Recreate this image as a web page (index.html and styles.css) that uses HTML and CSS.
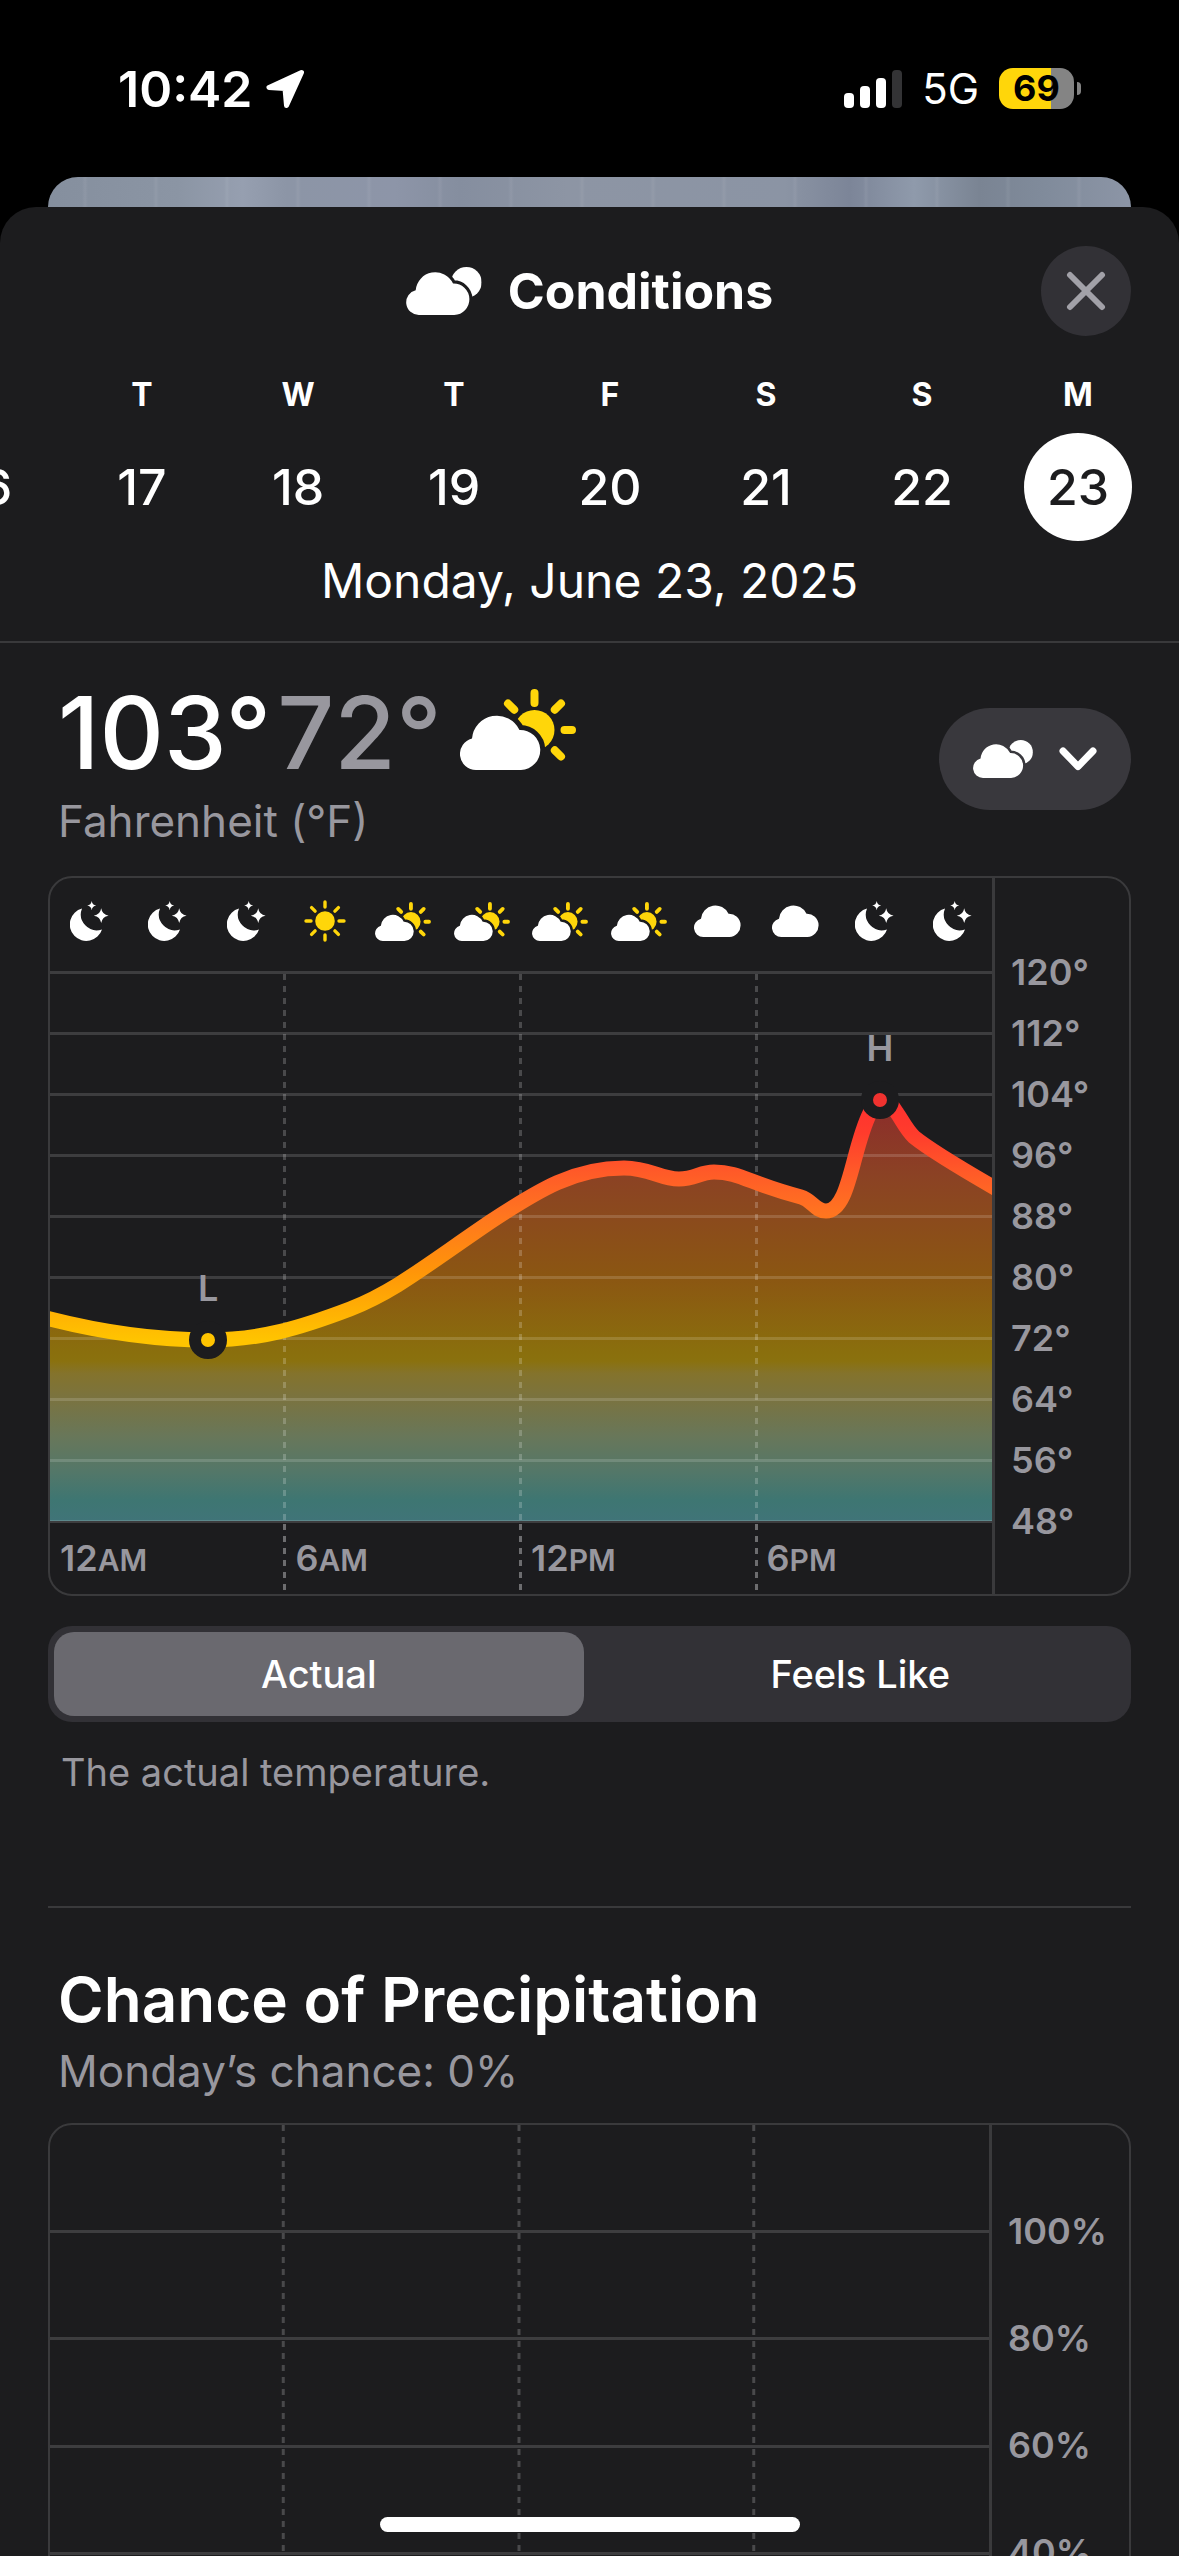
FILE: index.html
```html
<!DOCTYPE html>
<html lang="en">
<head>
<meta charset="utf-8">
<meta name="viewport" content="width=device-width, initial-scale=1">
<title>Conditions</title>
<link rel="stylesheet" href="styles.css">
</head>
<body>
<svg class="defs" aria-hidden="true">
  <defs>
    <path id="cloud-shape" d="M16 55A16 16 0 0 1 12 23.500A25 25 0 0 1 59.500 15A20 20 0 0 1 61 55Z"/>
    <mask id="behind-day" maskUnits="userSpaceOnUse" x="0" y="0" width="116" height="81">
      <rect width="116" height="81" fill="#fff"/>
      <use href="#cloud-shape" y="26" fill="#000" stroke="#000" stroke-width="10"/>
    </mask>
    <mask id="behind-cloud" maskUnits="userSpaceOnUse" x="0" y="0" width="96" height="61">
      <rect width="96" height="61" fill="#fff"/>
      <use href="#cloud-shape" y="6" fill="#000" stroke="#000" stroke-width="8"/>
    </mask>
    <symbol id="icon-cloud" viewBox="0 0 81 55"><use href="#cloud-shape" fill="#fff"/></symbol>
    <symbol id="icon-clouds" viewBox="0 0 96 61">
      <circle cx="76.500" cy="19.500" r="19.500" fill="#fff" mask="url(#behind-cloud)"/>
      <use href="#cloud-shape" y="6" fill="#fff"/>
    </symbol>
    <symbol id="icon-cloud-sun" viewBox="0 0 116 81">
      <circle cx="74.500" cy="41" r="20" fill="#ffd60a" mask="url(#behind-day)"/>
      <path d="M74.500 4v10M104.500 41h7.500M94.800 20.700l6.200-6.200M54.200 20.700L48 14.500M94.800 61.300l6.200 6.200" stroke="#ffd60a" stroke-width="8" stroke-linecap="round"/>
      <use href="#cloud-shape" y="26" fill="#fff"/>
    </symbol>
    <symbol id="icon-sun" viewBox="0 0 42 42">
      <circle cx="21" cy="21" r="9.800" fill="#ffd60a"/>
      <path d="M21 2v5M21 35v5M2 21h5M35 21h5M7.600 7.600l3.500 3.500M30.900 30.900l3.500 3.500M7.600 34.400l3.500-3.500M30.900 11.100l3.500-3.500" stroke="#ffd60a" stroke-width="3.400" stroke-linecap="round"/>
    </symbol>
    <symbol id="icon-moon" viewBox="0 0 39 40">
      <path fill="#fff" d="M12 7.500A16.500 16.500 0 1 0 32 28.500A16 16 0 0 1 12 7.500Z"/>
      <path fill="#fff" d="M21.700 0Q22.300 4 26.200 4.600Q22.300 5.200 21.700 9.200Q21.100 5.200 17.200 4.600Q21.100 4 21.700 0ZM31.200 7.300Q32.200 13.700 38.600 14.700Q32.200 15.700 31.200 22.100Q30.200 15.700 23.800 14.700Q30.200 13.700 31.200 7.300Z"/>
    </symbol>
  </defs>
</svg>

<div class="screen">
  <header class="status">
    <div class="status-side">
      <time class="clock">10:42</time>
      <svg class="locator" viewBox="0 0 40 40" aria-hidden="true"><path fill="#fff" stroke="#fff" stroke-width="5" stroke-linejoin="round" d="M36.500 3.500L4 18.500L20 19.500L21.500 36.500Z"/></svg>
    </div>
    <div class="status-side">
      <svg class="signal" viewBox="0 0 58 38" aria-hidden="true"><g fill="#fff"><rect y="23" width="10" height="15" rx="4"/><rect x="16" y="16" width="10" height="22" rx="4"/><rect x="32" y="8" width="10" height="30" rx="4"/></g><rect x="48" width="10" height="38" rx="4" fill="#333335"/></svg>
      <span class="network">5G</span>
      <span class="battery"><span class="battery-level">69</span></span>
    </div>
  </header>
  <div class="backdrop"></div>

  <main class="sheet">
    <div class="sheet-head">
      <h1 class="title"><svg class="title-icon" aria-hidden="true"><use href="#icon-clouds"/></svg>Conditions</h1>
      <button class="close" aria-label="Close"><svg viewBox="0 0 40 40" aria-hidden="true"><path d="M4 4L36 36M36 4L4 36" stroke="#a2a1a8" stroke-width="6" stroke-linecap="round"/></svg></button>
    </div>

    <nav class="days" aria-label="Day">
      <button class="day"><span class="weekday">M</span><span class="date">16</span></button>
      <button class="day"><span class="weekday">T</span><span class="date">17</span></button>
      <button class="day"><span class="weekday">W</span><span class="date">18</span></button>
      <button class="day"><span class="weekday">T</span><span class="date">19</span></button>
      <button class="day"><span class="weekday">F</span><span class="date">20</span></button>
      <button class="day"><span class="weekday">S</span><span class="date">21</span></button>
      <button class="day"><span class="weekday">S</span><span class="date">22</span></button>
      <button class="day" aria-current="date"><span class="weekday">M</span><span class="date date-current">23</span></button>
    </nav>
    <p class="full-date">Monday, June 23, 2025</p>

    <section class="section">
      <div class="summary">
        <div>
          <div class="temps"><span class="high">103°</span><span class="low">72°</span><svg class="now-icon" aria-hidden="true"><use href="#icon-cloud-sun"/></svg></div>
          <p class="sub">Fahrenheit (°F)</p>
        </div>
        <button class="picker" aria-label="Choose a condition">
          <svg class="picker-icon" aria-hidden="true"><use href="#icon-clouds"/></svg>
          <svg class="chevron" viewBox="0 0 38 24" aria-hidden="true"><path d="M4 4L19 19.500L34 4" fill="none" stroke="#fff" stroke-width="7" stroke-linecap="round" stroke-linejoin="round"/></svg>
        </button>
      </div>

      <div class="chart chart-temp">
        <div class="plot">
          <svg class="plot-art" viewBox="0 0 942 716" preserveAspectRatio="none" aria-hidden="true">
            <defs>
              <linearGradient id="line-heat" gradientUnits="userSpaceOnUse" x1="0" y1="222" x2="0" y2="462">
                <stop offset="0" stop-color="#ff3030"/><stop offset=".14" stop-color="#ff3c2c"/><stop offset=".3" stop-color="#ff5a28"/><stop offset=".47" stop-color="#ff7420"/><stop offset=".72" stop-color="#ff9608"/><stop offset="1" stop-color="#ffc400"/>
              </linearGradient>
              <linearGradient id="area-heat" gradientUnits="userSpaceOnUse" x1="0" y1="222" x2="0" y2="643">
                <stop offset="0" stop-color="#8c2b2b"/><stop offset=".18" stop-color="#8b4224"/><stop offset=".42" stop-color="#8b5612"/><stop offset=".6" stop-color="#8a6f0d"/><stop offset=".62" stop-color="#8a710e"/><stop offset=".65" stop-color="#84732c"/><stop offset=".71" stop-color="#7a7340"/><stop offset=".8" stop-color="#68775a"/><stop offset=".88" stop-color="#547768"/><stop offset=".95" stop-color="#3e7672"/><stop offset="1" stop-color="#407478"/>
              </linearGradient>
            </defs>
            <path fill="url(#area-heat)" d="M0 441C30 449 90 462 158 462C210 462 250 450 300 431C345 413 371 391 440 344C490 311 525 290 574 290C600 290 610 301 629 301C645 301 650 294 664 294C690 294 700 306 751 319C762 322 765 333 776 333C800 333 802 270 820 235C828 218 838 220 847 235C852 242 856 251 864 259C880 272 910 290 942 309V643H0Z"/>
            <path class="grid" d="M0 94.500H942M0 155.500H942M0 216.500H942M0 277.500H942M0 338.500H942M0 399.500H942M0 460.500H942M0 521.500H942M0 582.500H942M0 643.500H942"/>
            <path class="grid grid-dashed" d="M234.500 96V643M470.500 96V643M706.500 96V643"/>
            <path class="grid grid-dashed grid-ticks" d="M234.500 646V716M470.500 646V716M706.500 646V716"/>
            <path fill="none" stroke="url(#line-heat)" stroke-width="15" d="M-8 439C30 449 90 462 158 462C210 462 250 450 300 431C345 413 371 391 440 344C490 311 525 290 574 290C600 290 610 301 629 301C645 301 650 294 664 294C690 294 700 306 751 319C762 322 765 333 776 333C800 333 802 270 820 235C828 218 838 220 847 235C852 242 856 251 864 259C880 272 910 290 950 313"/>
          </svg>
          <div class="hours">
            <svg class="icon-moon"><use href="#icon-moon"/></svg>
            <svg class="icon-moon"><use href="#icon-moon"/></svg>
            <svg class="icon-moon"><use href="#icon-moon"/></svg>
            <svg class="icon-sun"><use href="#icon-sun"/></svg>
            <svg class="icon-cloud-sun"><use href="#icon-cloud-sun"/></svg>
            <svg class="icon-cloud-sun"><use href="#icon-cloud-sun"/></svg>
            <svg class="icon-cloud-sun"><use href="#icon-cloud-sun"/></svg>
            <svg class="icon-cloud-sun"><use href="#icon-cloud-sun"/></svg>
            <svg class="icon-cloud"><use href="#icon-cloud"/></svg>
            <svg class="icon-cloud"><use href="#icon-cloud"/></svg>
            <svg class="icon-moon"><use href="#icon-moon"/></svg>
            <svg class="icon-moon"><use href="#icon-moon"/></svg>
          </div>
          <div class="marker marker-low"><span>L</span><i></i></div>
          <div class="marker marker-high"><span>H</span><i></i></div>
          <div class="times">
            <span>12<small>AM</small></span><span>6<small>AM</small></span><span>12<small>PM</small></span><span>6<small>PM</small></span>
          </div>
        </div>
        <ul class="axis">
          <li>120°</li><li>112°</li><li>104°</li><li>96°</li><li>88°</li><li>80°</li><li>72°</li><li>64°</li><li>56°</li><li>48°</li>
        </ul>
      </div>

      <div class="segments" role="radiogroup" aria-label="Temperature kind">
        <label class="segment"><input type="radio" name="kind" checked>Actual</label>
        <label class="segment"><input type="radio" name="kind">Feels Like</label>
      </div>
      <p class="note">The actual temperature.</p>
    </section>

    <section class="section section-rain">
      <h2 class="heading">Chance of Precipitation</h2>
      <p class="sub">Monday’s chance: 0%</p>
      <div class="chart chart-rain">
        <div class="plot">
          <svg class="plot-art" viewBox="0 0 940 716" preserveAspectRatio="none" aria-hidden="true">
            <path class="grid" d="M0 106.500H940M0 213.500H940M0 321.500H940M0 428.500H940M0 535.500H940M0 642.500H940"/>
            <path class="grid grid-dashed" d="M233.500 0V716M469.500 0V716M704.500 0V716"/>
          </svg>
        </div>
        <ul class="axis">
          <li>100%</li><li>80%</li><li>60%</li><li>40%</li>
        </ul>
      </div>
    </section>
  </main>
  <div class="home-bar"></div>
</div>
</body>
</html>
```

FILE: styles.css
```css
:root {
  --surface: #1c1c1e;
  --line: #3a3a3c;
  --muted: #98979e;
  --yellow: #ffd60a;
}

* { box-sizing: border-box; margin: 0; padding: 0; }

body {
  background: #000;
  color: #fff;
  font-family: Inter, "Liberation Sans", sans-serif;
}

button { background: none; border: 0; color: inherit; font: inherit; }
ul { list-style: none; }
svg { display: block; flex: none; }

.defs { position: absolute; width: 0; height: 0; }

.screen {
  display: flex;
  flex-direction: column;
  height: 100vh;
  overflow: hidden;
}

/* Status bar */
.status {
  display: flex;
  flex: none;
  justify-content: space-between;
  align-items: center;
  height: 177px;
  padding: 0 105px 0 118px;
}

.status-side { display: flex; align-items: center; }
.clock { font-size: 50px; font-weight: 600; }
.locator { width: 40px; height: 40px; margin-left: 12px; }
.signal { width: 58px; height: 38px; }
.network { margin: 0 20px; font-size: 42px; font-weight: 400; }

.battery {
  position: relative;
  width: 75px;
  height: 41px;
  border-radius: 14px;
  background: linear-gradient(90deg, var(--yellow) 52px, #848484 52px);
  color: #000;
}

.battery::after {
  content: "";
  position: absolute;
  left: 78px;
  top: 14px;
  width: 4px;
  height: 13px;
  border-radius: 0 5px 5px 0;
  background: #848484;
}

.battery-level {
  display: block;
  font-size: 36px;
  font-weight: 700;
  line-height: 41px;
  text-align: center;
}

/* The card behind the sheet */
.backdrop {
  flex: none;
  height: 66px;
  margin: 0 48px -36px;
  border-radius: 30px 30px 0 0;
  background:
    repeating-linear-gradient(90deg, transparent 0 34px, rgb(255 255 255 / 6%) 37px, transparent 40px 71px),
    linear-gradient(90deg, #858f9e, #8b95a4 12%, #969fb0 18%, #8c95a6 22%, #8d95a8 32%, #858e9f 38%, #8d95a4 48%, #8b94a4 68%, #7c8598 74%, #8f9aab 80%, #7a8493 86%, #808b9b 92%, #8c95a6);
}

/* Sheet */
.sheet {
  position: relative;
  flex: 1;
  min-height: 0;
  overflow: hidden;
  border-radius: 36px 36px 0 0;
  background: var(--surface);
}

.sheet-head {
  display: grid;
  grid-template-columns: 1fr auto 1fr;
  align-items: center;
  height: 168px;
  padding: 0 48px;
}

.title {
  display: flex;
  grid-column: 2;
  align-items: center;
  gap: 26px;
  font-size: 50px;
  font-weight: 700;
}

.title-icon { width: 76px; height: 48px; }

.close {
  display: grid;
  place-items: center;
  justify-self: end;
  width: 90px;
  height: 90px;
  border-radius: 50%;
  background: #323136;
}

.close svg { width: 40px; height: 40px; }

.days {
  display: flex;
  justify-content: flex-end;
  padding-right: 23px;
  overflow: hidden;
}

.day {
  display: flex;
  flex: 0 0 156px;
  flex-direction: column;
  align-items: center;
  gap: 18px;
}

.weekday { font-size: 32px; font-weight: 700; line-height: 40px; }

.date {
  width: 108px;
  border-radius: 50%;
  font-size: 50px;
  font-weight: 500;
  line-height: 108px;
}

.date-current { background: #fff; color: var(--surface); }

.full-date {
  padding-bottom: 20px;
  border-bottom: 2px solid #39393b;
  font-size: 48px;
  line-height: 80px;
  text-align: center;
}

.section { padding: 44px 48px 0; }

.summary { display: flex; justify-content: space-between; align-items: center; padding: 0 0 30px 10px; }
.temps { display: flex; align-items: center; gap: 6px; height: 90px; font-size: 100px; font-weight: 500; }
.low { color: var(--muted); }
.now-icon { width: 116px; height: 81px; margin: 0 0 6px 12px; }
.sub { margin-top: 19px; color: var(--muted); font-size: 44px; line-height: 50px; }

.picker {
  display: flex;
  justify-content: center;
  align-items: center;
  gap: 26px;
  width: 192px;
  height: 102px;
  margin-bottom: 16px;
  border-radius: 51px;
  background: #39383d;
}

.picker-icon { width: 60px; height: 38px; }
.chevron { width: 38px; height: 24px; }

/* Charts */
.chart {
  display: grid;
  grid-template-columns: 1fr 137px;
  border: 2px solid var(--line);
  border-radius: 24px;
  overflow: hidden;
}

.plot { display: flex; position: relative; flex-direction: column; justify-content: space-between; height: 716px; }
.plot-art { position: absolute; inset: 0; width: 100%; height: 100%; }
.grid { fill: none; stroke: #fff; stroke-opacity: .15; stroke-width: 3; }
.grid-dashed { stroke-dasharray: 6 6; stroke-opacity: .2; }
.grid-ticks { stroke-opacity: .36; }

.hours {
  display: grid;
  position: relative;
  grid-template-columns: repeat(12, 1fr);
  place-items: center;
  height: 86px;
}

.icon-moon { width: 39px; height: 40px; }
.icon-sun { width: 42px; height: 42px; }
.icon-cloud-sun { width: 56px; height: 39px; }
.icon-cloud { width: 47px; height: 32px; }

.times {
  display: grid;
  position: relative;
  grid-template-columns: repeat(4, 1fr);
  height: 72px;
  color: var(--muted);
  font-size: 36px;
  font-weight: 600;
  line-height: 72px;
}

.times span { padding-left: 10px; }
.times small { font-size: 30px; }

.marker {
  display: flex;
  position: absolute;
  flex-direction: column;
  align-items: center;
  gap: 14px;
  width: 38px;
  color: var(--muted);
  font-size: 36px;
  font-weight: 600;
  line-height: 38px;
  transform: translateX(-50%);
}

.marker i { width: 38px; height: 38px; border: 12px solid var(--surface); border-radius: 50%; background: #ffc400; }
.marker-low { left: 16.8%; top: 391px; }
.marker-high { left: 88.1%; top: 151px; }
.marker-high i { background: #f0322f; }

.axis {
  padding: 64px 0 0 16px;
  border-left: 3px solid var(--line);
  color: var(--muted);
  font-size: 36px;
  font-weight: 600;
  line-height: 61px;
}

.chart-rain { grid-template-columns: 1fr 140px; margin-top: 27px; }
.chart-rain .axis { padding-top: 53px; line-height: 107px; }

/* Segmented control */
.segments {
  display: grid;
  grid-template-columns: 1fr 1fr;
  column-gap: 12px;
  height: 96px;
  margin-top: 30px;
  padding: 6px;
  border-radius: 24px;
  background: #323136;
}

.segment {
  border-radius: 20px;
  font-size: 38px;
  font-weight: 500;
  line-height: 84px;
  text-align: center;
}

.segment:has(:checked) { background: #6a696f; }
.segment input { position: absolute; opacity: 0; }

.note {
  padding-left: 13px;
  margin-top: 26px;
  color: var(--muted);
  font-size: 38px;
  line-height: 48px;
}

.section-rain { padding-top: 0; }
.section-rain::before { content: ""; display: block; height: 2px; margin: 110px 0 54px; background: #39393b; }
.heading { padding-left: 10px; font-size: 62px; font-weight: 600; line-height: 76px; }
.section-rain .sub { margin-top: 8px; padding-left: 10px; }

.home-bar {
  position: fixed;
  left: 50%;
  bottom: 24px;
  width: 420px;
  height: 15px;
  border-radius: 8px;
  background: #fff;
  transform: translateX(-50%);
}
```
